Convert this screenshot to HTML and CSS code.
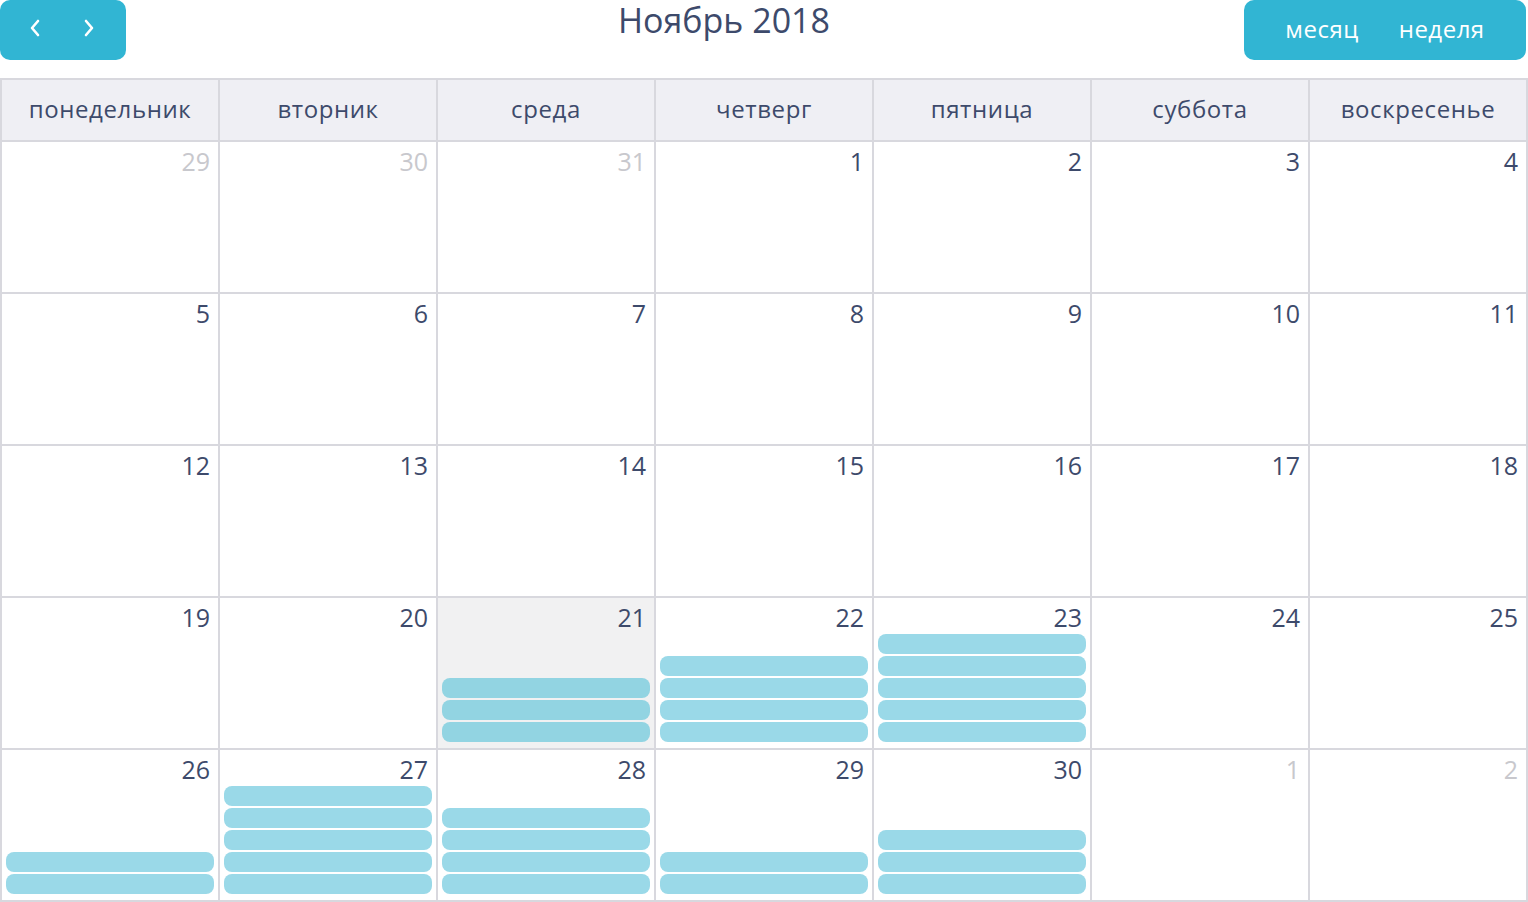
FILE: index.html
```html
<!DOCTYPE html>
<html lang="ru">
<head>
    <meta charset="UTF-8">
    <meta name="viewport" content="width=device-width, initial-scale=1.0">
    <title>Календарь</title>
    <link rel="stylesheet" href="styles.css">
</head>
<body>
    <div class="toolbar">
        <div class="btn-group nav">
            <button class="btn icon-btn" aria-label="prev">
                <svg width="14" height="20" viewBox="0 0 14 20"><path d="M10 3 L4 10 L10 17" fill="none" stroke="#fff" stroke-width="2.6" stroke-linecap="round" stroke-linejoin="round"/></svg>
            </button>
            <button class="btn icon-btn" aria-label="next">
                <svg width="14" height="20" viewBox="0 0 14 20"><path d="M4 3 L10 10 L4 17" fill="none" stroke="#fff" stroke-width="2.6" stroke-linecap="round" stroke-linejoin="round"/></svg>
            </button>
        </div>
        <h2 class="title">Ноябрь 2018</h2>
        <div class="btn-group views">
            <button class="btn">месяц</button>
            <button class="btn">неделя</button>
        </div>
    </div>

    <div class="calendar">
        <div class="head">понедельник</div>
        <div class="head">вторник</div>
        <div class="head">среда</div>
        <div class="head">четверг</div>
        <div class="head">пятница</div>
        <div class="head">суббота</div>
        <div class="head">воскресенье</div>

        <div class="day other"><span class="num">29</span></div>
        <div class="day other"><span class="num">30</span></div>
        <div class="day other"><span class="num">31</span></div>
        <div class="day"><span class="num">1</span></div>
        <div class="day"><span class="num">2</span></div>
        <div class="day"><span class="num">3</span></div>
        <div class="day"><span class="num">4</span></div>

        <div class="day"><span class="num">5</span></div>
        <div class="day"><span class="num">6</span></div>
        <div class="day"><span class="num">7</span></div>
        <div class="day"><span class="num">8</span></div>
        <div class="day"><span class="num">9</span></div>
        <div class="day"><span class="num">10</span></div>
        <div class="day"><span class="num">11</span></div>

        <div class="day"><span class="num">12</span></div>
        <div class="day"><span class="num">13</span></div>
        <div class="day"><span class="num">14</span></div>
        <div class="day"><span class="num">15</span></div>
        <div class="day"><span class="num">16</span></div>
        <div class="day"><span class="num">17</span></div>
        <div class="day"><span class="num">18</span></div>

        <div class="day"><span class="num">19</span></div>
        <div class="day"><span class="num">20</span></div>
        <div class="day today"><span class="num">21</span>
            <div class="events"><i class="ev"></i><i class="ev"></i><i class="ev"></i></div>
        </div>
        <div class="day"><span class="num">22</span>
            <div class="events"><i class="ev"></i><i class="ev"></i><i class="ev"></i><i class="ev"></i></div>
        </div>
        <div class="day"><span class="num">23</span>
            <div class="events"><i class="ev"></i><i class="ev"></i><i class="ev"></i><i class="ev"></i><i class="ev"></i></div>
        </div>
        <div class="day"><span class="num">24</span></div>
        <div class="day"><span class="num">25</span></div>

        <div class="day"><span class="num">26</span>
            <div class="events"><i class="ev"></i><i class="ev"></i></div>
        </div>
        <div class="day"><span class="num">27</span>
            <div class="events"><i class="ev"></i><i class="ev"></i><i class="ev"></i><i class="ev"></i><i class="ev"></i></div>
        </div>
        <div class="day"><span class="num">28</span>
            <div class="events"><i class="ev"></i><i class="ev"></i><i class="ev"></i><i class="ev"></i></div>
        </div>
        <div class="day"><span class="num">29</span>
            <div class="events"><i class="ev"></i><i class="ev"></i></div>
        </div>
        <div class="day"><span class="num">30</span>
            <div class="events"><i class="ev"></i><i class="ev"></i><i class="ev"></i></div>
        </div>
        <div class="day other"><span class="num">1</span></div>
        <div class="day other"><span class="num">2</span></div>
    </div>
</body>
</html>
```

FILE: styles.css
```css
body { margin: 0; font-family: "Open Sans", "Noto Sans", sans-serif; color: #3d4a6b; background: #fff; }

.toolbar { display: flex; align-items: flex-start; height: 60px; margin-bottom: 18px; padding-right: 2px; }
.title { flex: 1; margin: 0; padding-left: 78px; text-align: center; font-size: 34px; font-weight: 400; line-height: 40px; color: #3d4a6b; }

.btn-group { display: flex; height: 60px; background: #31b5d3; border-radius: 10px; overflow: hidden; }
.btn { background: none; border: none; color: #fff; font-family: inherit; font-size: 24px; letter-spacing: 0.5px; cursor: pointer; padding: 0; }
.nav { width: 126px; }
.nav .btn { flex: 1; display: flex; align-items: center; justify-content: center; padding-bottom: 4px; }
.nav .btn:first-child { padding-left: 8px; }
.nav .btn:last-child { padding-right: 10px; }
.views { width: 282px; justify-content: center; gap: 40px; }
.views .btn { padding-bottom: 4px; }

.calendar { display: grid; grid-template-columns: repeat(7, 1fr); border-top: 2px solid #d8d8de; border-left: 2px solid #d8d8de; }
.head { height: 60px; line-height: 58px; text-align: center; background: #efeff4; font-size: 24px; letter-spacing: 0.6px; border-right: 2px solid #d8d8de; border-bottom: 2px solid #d8d8de; }
.day { height: 150px; display: flex; flex-direction: column; border-right: 2px solid #d8d8de; border-bottom: 2px solid #d8d8de; }
.day.today { background: #f1f1f2; }
.num { padding: 4px 8px 0; text-align: right; font-size: 25px; line-height: 30px; }
.other .num { color: #c8c8cd; }

.events { margin-top: auto; padding: 0 4px 6px; display: flex; flex-direction: column; gap: 2px; }
.ev { display: block; height: 20px; border-radius: 8px; background: #9ad9e8; }
.today .ev { background: #92d4e2; }
```
